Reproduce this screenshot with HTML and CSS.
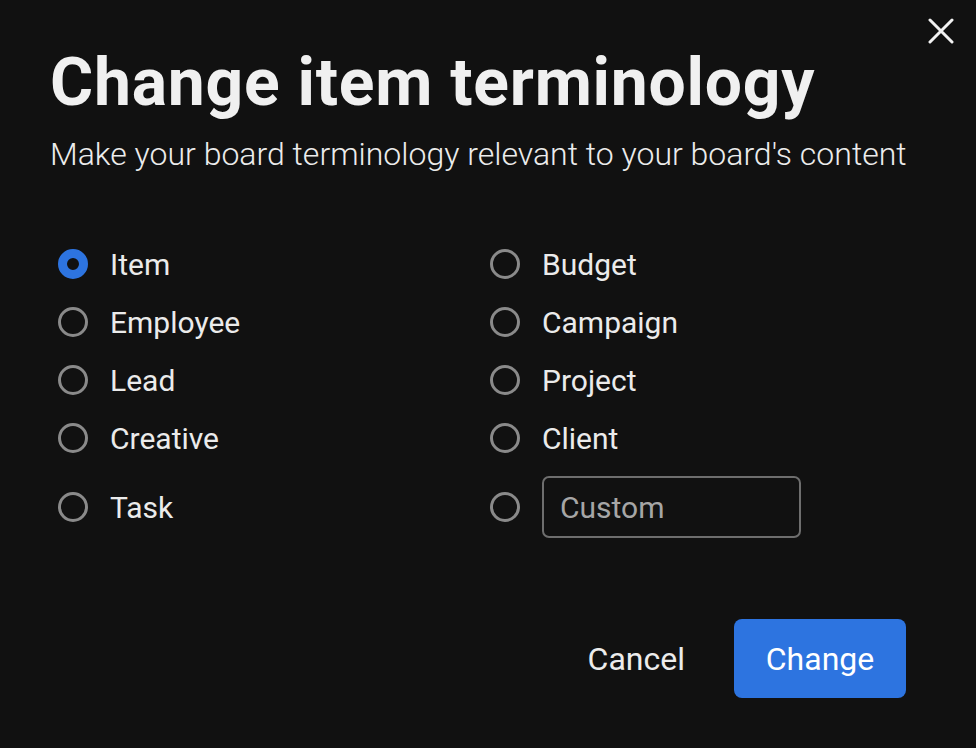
FILE: index.html
```html
<!DOCTYPE html>
<html lang="en">
<head>
<meta charset="utf-8">
<title>Change item terminology</title>
<link rel="stylesheet" href="styles.css">
</head>
<body>
<div class="dialog">
  <button class="close" aria-label="Close">
    <svg width="26" height="26" viewBox="0 0 26 26"><path d="M2 2 L24 24 M24 2 L2 24" stroke="#f2f2f2" stroke-width="3" stroke-linecap="round" fill="none"/></svg>
  </button>
  <h1 class="title">Change item terminology</h1>
  <p class="subtitle">Make your board terminology relevant to your board's content</p>
  <div class="options">
    <label class="opt"><span class="radio checked"></span><span class="lbl">Item</span></label>
    <label class="opt"><span class="radio"></span><span class="lbl">Budget</span></label>
    <label class="opt"><span class="radio"></span><span class="lbl">Employee</span></label>
    <label class="opt"><span class="radio"></span><span class="lbl">Campaign</span></label>
    <label class="opt"><span class="radio"></span><span class="lbl">Lead</span></label>
    <label class="opt"><span class="radio"></span><span class="lbl">Project</span></label>
    <label class="opt"><span class="radio"></span><span class="lbl">Creative</span></label>
    <label class="opt"><span class="radio"></span><span class="lbl">Client</span></label>
    <label class="opt"><span class="radio"></span><span class="lbl">Task</span></label>
    <label class="opt"><span class="radio"></span><span class="custom">Custom</span></label>
  </div>
  <div class="footer">
    <button class="btn cancel">Cancel</button>
    <button class="btn primary">Change</button>
  </div>
</div>
</body>
</html>
```

FILE: styles.css
```css
html, body {
  margin: 0;
  padding: 0;
  background: #111111;
  width: 976px;
  height: 748px;
  overflow: hidden;
  font-family: Roboto, "Liberation Sans", sans-serif;
  color: #eeeeee;
}
.dialog {
  position: relative;
  padding: 41px 70px 0 50px;
}
.close {
  position: absolute;
  top: 18px;
  right: 22px;
  background: none;
  border: 0;
  padding: 0;
  width: 26px;
  height: 26px;
  display: flex;
}
.title {
  margin: 0;
  font-size: 66px;
  font-weight: 700;
  line-height: 84px;
  letter-spacing: 0.75px;
  color: #f0f0f0;
  white-space: nowrap;
}
.subtitle {
  margin: 9px 0 0;
  font-size: 32px;
  font-weight: 300;
  line-height: 40px;
  color: #ececec;
  white-space: nowrap;
}
.options {
  margin-top: 61px;
  margin-left: 8px;
  display: grid;
  grid-template-columns: 432px 1fr;
  grid-template-rows: repeat(4, 58px) 80px;
  align-items: center;
}
.opt {
  display: flex;
  align-items: center;
  gap: 22px;
}
.radio {
  box-sizing: border-box;
  width: 30px;
  height: 30px;
  border-radius: 50%;
  border: 3px solid #8a8a8a;
  flex: none;
}
.radio.checked {
  border: 9px solid #2d74e0;
  background: #111111;
}
.lbl {
  font-size: 30px;
  color: #ebebeb;
}
.custom {
  box-sizing: border-box;
  width: 259px;
  height: 62px;
  border: 2px solid #6e6e6e;
  border-radius: 7px;
  padding: 0 16px;
  display: flex;
  align-items: center;
  font-size: 30px;
  color: #a6a6a6;
}
.footer {
  margin-top: 72px;
  display: flex;
  justify-content: flex-end;
  gap: 16px;
}
.btn {
  font-family: Roboto, "Liberation Sans", sans-serif;
  font-size: 32px;
  height: 79px;
  padding: 0 33px;
  border: 0;
  border-radius: 8px;
  background: none;
  color: #ececec;
}
.btn.primary {
  background: #2d74e0;
  color: #ffffff;
  width: 172px;
  padding: 0;
}
```
